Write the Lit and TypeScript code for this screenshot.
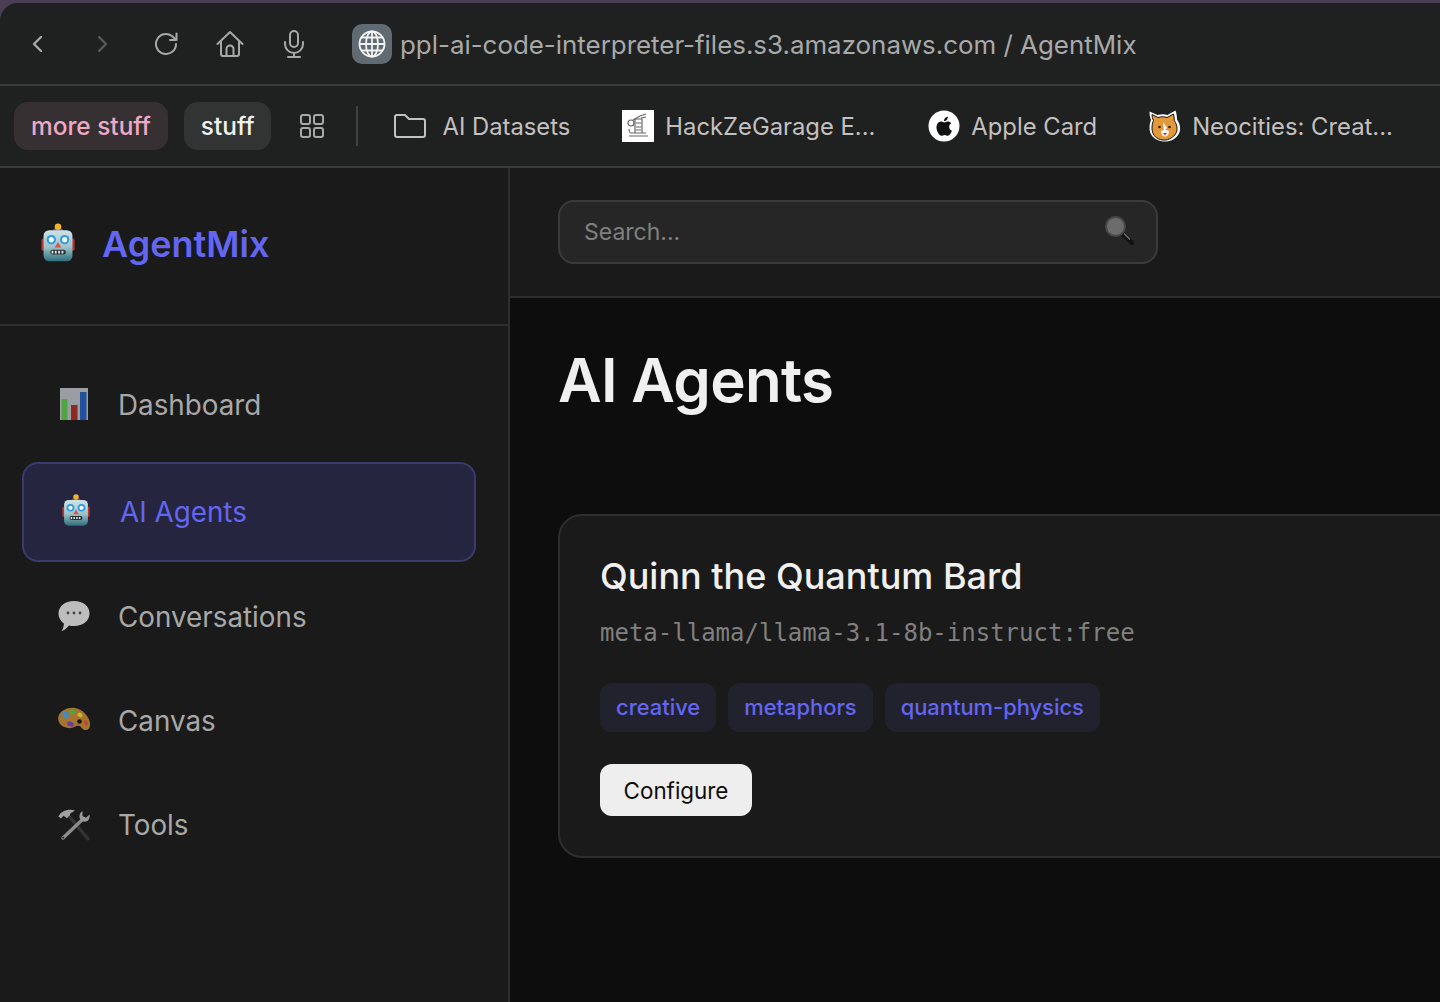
import { LitElement, html, css } from 'lit';
import { customElement } from 'lit/decorators.js';

const robotIcon = html`<svg class="emoji" viewBox="0 0 32 36">
  <defs><linearGradient id="robotFace" x1="0" y1="0" x2="0" y2="1">
    <stop offset="0" stop-color="#cfe3e6"/><stop offset=".55" stop-color="#9cc3c9"/><stop offset="1" stop-color="#2f6d7c"/>
  </linearGradient></defs>
  <rect x="1" y="14" width="4" height="11" rx="1.5" fill="#b3352c"/>
  <rect x="27" y="14" width="4" height="11" rx="1.5" fill="#b3352c"/>
  <path d="M11 7a5 2.6 0 0 1 10 0z" fill="#5b4aa5"/>
  <circle cx="16" cy="3.4" r="3" fill="#f5b32a"/>
  <rect x="3" y="6.5" width="26" height="28" rx="5" fill="url(#robotFace)"/>
  <circle cx="10" cy="15" r="4.2" fill="#2f9be0"/>
  <circle cx="10" cy="15" r="2.3" fill="#f2fbff"/>
  <circle cx="22" cy="15" r="4.2" fill="#2f9be0"/>
  <circle cx="22" cy="15" r="2.3" fill="#f2fbff"/>
  <path d="M16 17l3 5h-6z" fill="#d9534a"/>
  <rect x="9" y="24" width="14" height="4.4" rx="2" fill="#2b3236"/>
  <path d="M11 25v2.4M14 25v2.4M17 25v2.4M20 25v2.4" stroke="#e8e8e8" stroke-width="1.6"/>
</svg>`;

const navIcons: Record<string, unknown> = {
  robot: robotIcon,
  chart: html`<svg class="emoji chart" viewBox="0 0 28 32">
    <rect width="28" height="32" fill="#9a9ea3"/>
    <rect x="1.5" y="11" width="6" height="21" fill="#4fa53f"/>
    <rect x="11" y="17" width="6.5" height="15" fill="#8f2a20"/>
    <rect x="20" y="4" width="6.5" height="28" fill="#2450a0"/>
  </svg>`,
  speech: html`<svg class="emoji" viewBox="0 0 32 32">
    <path d="M16 1c9 0 15.5 5 15.5 12.5S25 26 16 26c-1.800 0-3.500-.2-5-.6C9 28 6.500 30 3.500 31c1.500-2 2.300-4 2.400-7.500C2.500 21 .5 17.500.5 13.500.5 6 7 1 16 1z" fill="#bdbdbd"/>
    <circle cx="10" cy="13" r="1.4" fill="#444"/><circle cx="16" cy="13" r="1.4" fill="#444"/><circle cx="22" cy="13" r="1.4" fill="#444"/>
  </svg>`,
  palette: html`<svg class="emoji" viewBox="0 0 32 26">
    <path d="M.5 9C3 3 10 0 17 1c7 1 14 8 15 15 .5 4-1.500 7-4 7-3.500.5-4-3-6.500-4C18 18 15 22 10 21 3 20-1 15 .5 9z" fill="#a5752f"/>
    <ellipse cx="7.5" cy="8" rx="3" ry="3.5" fill="#3d8cc4" transform="rotate(-30 7.5 8)"/>
    <ellipse cx="14" cy="5" rx="3" ry="2.3" fill="#4fa53f"/>
    <ellipse cx="22" cy="8" rx="2.8" ry="2" fill="#c9b52f" transform="rotate(35 22 8)"/>
    <ellipse cx="28" cy="16" rx="1.9" ry="3" fill="#c0473c" transform="rotate(-25 28 16)"/>
    <ellipse cx="12.5" cy="17" rx="3.5" ry="2.5" fill="#6a3fa0" transform="rotate(20 12.5 17)"/>
    <circle cx="21.5" cy="14.5" r="2.3" fill="#141414"/>
  </svg>`,
  tools: html`<svg class="emoji" viewBox="0 0 32 32">
    <path d="M11 8L30 31" stroke="#333" stroke-width="3.4" stroke-linecap="round"/>
    <path d="M25 11L5 30" stroke="#8c8c8c" stroke-width="3.4" stroke-linecap="round"/>
    <circle cx="5.2" cy="29.8" r="1" fill="#2a2a2a"/>
    <path d="M.5 8.500C3 3 10 .5 17 2.500l-2.500 1.800c-1.500.3-2.500 1.200-2.500 2.700l-3 3.300-3.500-2.500L3 10.500z" fill="#a0a0a0"/>
    <path d="M24.500 3c-3 2-4 5.500-2 8.500s7 3 8.500-.5c.7-1.500.8-3 .5-4.500l-3.500 3.200-3.500-1.700z" fill="#9a9a9a"/>
  </svg>`,
};

const navItems = [
  { icon: 'chart', label: 'Dashboard' },
  { icon: 'robot', label: 'AI Agents', active: true },
  { icon: 'speech', label: 'Conversations' },
  { icon: 'palette', label: 'Canvas' },
  { icon: 'tools', label: 'Tools' },
];

const tags = ['creative', 'metaphors', 'quantum-physics'];

@customElement('app-root')
export class AppRoot extends LitElement {
  static get styles() {
    return css`
    :host {
      display: block;
      height: 1002px;
      overflow: hidden;
      background: #4a3d55;
      font-family: Inter, "Liberation Sans", sans-serif;
    }
    .window {
      height: 999px;
      margin-top: 3px;
      border-top-left-radius: 18px;
      overflow: hidden;
      display: flex;
      flex-direction: column;
      background: #1f2121;
    }
    .toolbar {
      height: 81px;
      flex: none;
      display: flex;
      align-items: center;
      padding-left: 24px;
      border-bottom: 2px solid #3b3d3d;
    }
    .tool {
      width: 24px;
      height: 24px;
      fill: none;
      stroke: #a8a8a8;
      stroke-width: 2;
      stroke-linecap: round;
      stroke-linejoin: round;
      flex: none;
    }
    .tool.back {
      stroke-width: 2.4;
      margin-right: 43px;
    }
    .tool.forward {
      stroke: #585a5a;
      stroke-width: 2.4;
      margin-right: 40px;
    }
    .tool.reload {
      margin-right: 37px;
    }
    .tool.home {
      width: 28px;
      height: 28px;
      margin-right: 38px;
    }
    .tool.mic {
      height: 28px;
      margin-right: 46px;
    }
    .globe {
      width: 40px;
      height: 40px;
      border-radius: 10px;
      background: #5f6a72;
      display: flex;
      align-items: center;
      justify-content: center;
      flex: none;
    }
    .globe svg {
      width: 28px;
      height: 28px;
      fill: none;
      stroke: #f2f2f2;
      stroke-width: 1.8;
    }
    .url {
      margin: 2px 0 0 8px;
      font-size: 25.9px;
      color: #a9a9a9;
      white-space: nowrap;
    }
    .bookmarks {
      height: 80px;
      flex: none;
      display: flex;
      align-items: center;
      padding-left: 14px;
      border-bottom: 2px solid #3b3d3d;
      color: #c4c0c0;
      font-size: 23.8px;
      white-space: nowrap;
    }
    .group {
      height: 48px;
      padding: 0 17px;
      border-radius: 14px;
      display: flex;
      align-items: center;
      font-size: 24.4px;
      font-weight: 500;
      margin-right: 16px;
    }
    .group.pink {
      background: #373033;
      color: #eeaac6;
    }
    .group.grey {
      background: #323434;
      color: #f0f0f0;
      margin-right: 17px;
    }
    .grid-icon {
      width: 26px;
      height: 26px;
      margin-left: 11px;
      fill: none;
      stroke: #a8a8a8;
      stroke-width: 2;
      flex: none;
    }
    .divider {
      width: 2px;
      height: 40px;
      margin: 0 36px 0 31px;
      background: #3f4141;
      flex: none;
    }
    .bookmark {
      display: flex;
      align-items: center;
      gap: 11px;
      margin-right: 52px;
    }
    .bookmark.folder-link {
      gap: 16px;
    }
    .bookmark.wide {
      margin-right: 53px;
    }
    .bookmark svg {
      flex: none;
    }
    .folder {
      width: 32px;
      height: 24px;
      fill: none;
      stroke: #c4c0c0;
      stroke-width: 2;
      stroke-linejoin: round;
    }
    .favicon {
      width: 32px;
      height: 32px;
    }
    .body {
      flex: 1;
      display: flex;
      min-height: 0;
    }
    .sidebar {
      width: 510px;
      box-sizing: border-box;
      flex: none;
      background: #1a1a1a;
      border-right: 2px solid #2e2e2e;
      display: flex;
      flex-direction: column;
    }
    .brand {
      height: 158px;
      box-sizing: border-box;
      flex: none;
      display: flex;
      align-items: center;
      gap: 26px;
      padding: 0 0 4px 40px;
      border-bottom: 2px solid #2e2e2e;
      color: #6366f1;
      font-size: 36px;
      font-weight: 600;
    }
    .brand .emoji {
      width: 36px;
      height: 40px;
      margin-top: -2px;
    }
    .nav-list {
      padding: 27px 32px 0 22px;
      display: flex;
      flex-direction: column;
    }
    .nav-item {
      height: 104px;
      display: flex;
      align-items: center;
      gap: 28px;
      padding-left: 36px;
      box-sizing: border-box;
      color: #a8a8a8;
      font-size: 27.8px;
    }
    .nav-item .icon-slot {
      width: 32px;
      height: 36px;
      display: flex;
      align-items: center;
      justify-content: center;
      flex: none;
      margin-top: -2px;
    }
    .nav-item .emoji {
      width: 100%;
      height: 100%;
    }
    .nav-item .emoji.chart {
      width: 28px;
      height: 32px;
    }
    .nav-item.active {
      height: 100px;
      margin: 5px 0 3px;
      background: #25253f;
      border: 2px solid #3a3a70;
      border-radius: 16px;
      color: #6366f1;
    }
    .nav-item.active .icon-slot {
      margin-top: -4px;
    }
    .nav-item.active .emoji {
      width: 30px;
      height: 33px;
    }
    .main {
      flex: 1;
      min-width: 0;
      background: #0d0d0d;
      display: flex;
      flex-direction: column;
    }
    .topbar {
      height: 130px;
      box-sizing: border-box;
      flex: none;
      background: #1a1a1a;
      border-bottom: 2px solid #2e2e2e;
      padding: 32px 0 0 48px;
    }
    .search {
      width: 600px;
      height: 64px;
      box-sizing: border-box;
      border: 2px solid #3a3a3a;
      border-radius: 16px;
      background: #262626;
      display: flex;
      align-items: center;
      justify-content: space-between;
      padding: 0 22px 0 24px;
      color: #808080;
      font-size: 23px;
    }
    .search svg {
      width: 30px;
      height: 30px;
      margin-top: -4px;
    }
    .content {
      padding: 46px 0 0 48px;
    }
    h1 {
      margin: 0 0 98px;
      font-size: 60px;
      line-height: 72px;
      font-weight: 600;
      color: #f0f0f0;
      letter-spacing: -0.7px;
    }
    .card {
      width: 1100px;
      height: 344px;
      box-sizing: border-box;
      background: #1a1a1a;
      border: 2px solid #2e2e2e;
      border-radius: 24px;
      padding: 38px 40px 0;
    }
    h2 {
      margin: 0 0 19px;
      font-size: 36px;
      line-height: 44px;
      font-weight: 500;
      color: #f0f0f0;
    }
    .model {
      font-family: "DejaVu Sans Mono", "Liberation Mono", monospace;
      font-size: 24px;
      line-height: 32px;
      color: #808080;
    }
    .tags {
      display: flex;
      gap: 12px;
      margin: 34px 0 32px;
    }
    .tag {
      height: 49px;
      box-sizing: border-box;
      padding: 0 16px 2px;
      display: flex;
      align-items: center;
      border-radius: 12px;
      background: #22222f;
      color: #6366f1;
      font-size: 21.9px;
      font-weight: 500;
    }
    button {
      width: 152px;
      height: 52px;
      padding: 0;
      border: none;
      border-radius: 12px;
      background: #eeeeee;
      color: #0d0d0d;
      font: 400 22.4px Inter, "Liberation Sans", sans-serif;
    }
    `;
  }

  render() {
    return html`
    <div class="window">
      <div class="toolbar">
        <svg class="tool back" viewBox="0 0 24 24"><path d="M17 5l-7 7 7 7"/></svg>
        <svg class="tool forward" viewBox="0 0 24 24"><path d="M8 5l7 7-7 7"/></svg>
        <svg class="tool reload" viewBox="0 0 24 24"><path d="M21 12a10 10 0 1 1-4-8l4 3.5"/><path d="M21.5 1.5V8H15"/></svg>
        <svg class="tool home" viewBox="0 0 28 28"><path d="M1.5 14L14 2l12.5 12"/><path d="M5 11v13a2 2 0 0 0 2 2h14a2 2 0 0 0 2-2V11"/><path d="M10.5 26v-7a3.5 3.5 0 0 1 7 0v7"/></svg>
        <svg class="tool mic" viewBox="0 0 24 28"><rect x="8" y="1" width="8" height="16" rx="4"/><path d="M3 12v2a9 9 0 0 0 18 0v-2"/><path d="M12 23v4M6 27h12"/></svg>
        <div class="globe">
          <svg viewBox="0 0 28 28"><circle cx="14" cy="14" r="12.5"/><ellipse cx="14" cy="14" rx="6" ry="12.5"/><path d="M14 1.5v25M1.5 14h25M3.500 7.500h21M3.500 20.500h21"/></svg>
        </div>
        <div class="url">ppl-ai-code-interpreter-files.s3.amazonaws.com / AgentMix</div>
      </div>

      <div class="bookmarks">
        <div class="group pink">more stuff</div>
        <div class="group grey">stuff</div>
        <svg class="grid-icon" viewBox="0 0 26 26"><rect x="2" y="2" width="9" height="9" rx="2"/><rect x="15" y="2" width="9" height="9" rx="2"/><rect x="2" y="15" width="9" height="9" rx="2"/><rect x="15" y="15" width="9" height="9" rx="2"/></svg>
        <div class="divider"></div>
        <div class="bookmark folder-link">
          <svg class="folder" viewBox="0 0 32 24"><path d="M1 21V3a2 2 0 0 1 2-2h8l4 4h14a2 2 0 0 1 2 2v14a2 2 0 0 1-2 2H3a2 2 0 0 1-2-2z"/></svg>
          AI Datasets
        </div>
        <div class="bookmark wide">
          <svg class="favicon" viewBox="0 0 32 32">
            <rect width="32" height="32" fill="#fff"/>
            <g fill="none" stroke="#666" stroke-width="1.2">
              <circle cx="9" cy="13" r="3"/><path d="M11 10l7-4 6-2M19 8l5-1"/>
              <path d="M13 9h7v14h-7zM14 13h5M14 17h5M14 20h5M7 26h19M9 23h15M7 19c0 2 1 4 2 4"/>
            </g>
          </svg>
          HackZeGarage E...
        </div>
        <div class="bookmark">
          <svg class="favicon" viewBox="0 0 32 32">
            <circle cx="16" cy="16" r="15.5" fill="#fff"/>
            <path d="M21.2 16.800c0-2.300 1.900-3.400 2-3.500-1.100-1.600-2.800-1.800-3.400-1.800-1.400-.1-2.800.9-3.500.9s-1.900-.9-3.100-.8c-1.600 0-3.100.9-3.900 2.300-1.700 2.900-.4 7.200 1.200 9.500.8 1.100 1.700 2.400 3 2.300 1.200 0 1.600-.8 3.100-.8s1.900.8 3.100.8 2.100-1.100 2.900-2.300c.9-1.300 1.300-2.600 1.300-2.700-.1 0-2.700-1-2.700-3.900zM18.900 9.800c.6-.8 1.100-1.900.9-3-1 0-2.100.6-2.800 1.400-.6.700-1.100 1.800-1 2.900 1.100.1 2.200-.5 2.900-1.300z" fill="#111"/>
          </svg>
          Apple Card
        </div>
        <div class="bookmark">
          <svg class="favicon" viewBox="0 0 32 32">
            <path d="M.5 1.500l8 3.500c4-1 7-1 10 0L26.500.5c1 2.500 1.500 6 1.500 9 4 5.500 4.500 12.500-.5 17.500-4 4-10.500 5.500-16 4C5 29.500.5 25 .5 18c0-3 .5-5.500 1.500-8C1 7.500.5 4.500.5 1.500z" fill="#fff"/>
            <path d="M3 4.500l6 3c3-1 6-1 9 0l6.500-3.500c.5 2 .8 4 .8 6.500 3.500 5 4 11.500-.5 15.500-3.500 3.500-9 5-13.500 3.500C6 28 3 24 3 18c0-3 .5-5.500 1.500-7.500C3.500 8.500 3 6.500 3 4.500z" fill="#e3983a" stroke="#111" stroke-width="1"/>
            <path d="M14 12l4 6-3 3z" fill="#fff"/>
            <circle cx="10.500" cy="17" r="1.300" fill="#222"/><circle cx="20.500" cy="17" r="1.300" fill="#222"/>
            <path d="M12 21c2-1.500 6-1.500 8 0 0 3-1.500 5.500-4 5.500S12 24 12 21z" fill="#f3f3f3"/>
            <path d="M14 23h4l-2 2.500z" fill="#b3352c"/>
          </svg>
          Neocities: Creat...
        </div>
      </div>

      <div class="body">
        <aside class="sidebar">
          <div class="brand">${robotIcon}AgentMix</div>
          <div class="nav-list">
            ${navItems.map(item => html`
              <div class="nav-item ${item.active ? 'active' : ''}">
                <span class="icon-slot">${navIcons[item.icon]}</span>
                <span>${item.label}</span>
              </div>
            `)}
          </div>
        </aside>

        <div class="main">
          <div class="topbar">
            <div class="search">
              Search...
              <svg viewBox="0 0 30 30">
                <path d="M18 18l10 10" stroke="#111" stroke-width="4.500" stroke-linecap="round"/>
                <path d="M20 18.500l6 6" stroke="#6f6f6f" stroke-width="1.500"/>
                <circle cx="11.500" cy="11.500" r="9.500" fill="#6c6c6c" stroke="#484848" stroke-width="2"/>
              </svg>
            </div>
          </div>
          <div class="content">
            <h1>AI Agents</h1>
            <div class="card">
              <h2>Quinn the Quantum Bard</h2>
              <div class="model">meta-llama/llama-3.1-8b-instruct:free</div>
              <div class="tags">
                ${tags.map(tag => html`<span class="tag">${tag}</span>`)}
              </div>
              <button>Configure</button>
            </div>
          </div>
        </div>
      </div>
    </div>
    `;
  }
}
